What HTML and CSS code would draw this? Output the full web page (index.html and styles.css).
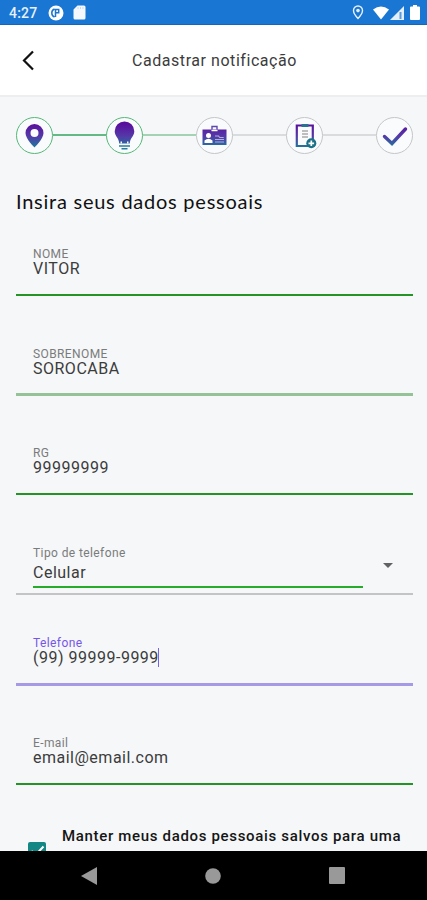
FILE: index.html
```html
<!DOCTYPE html>
<html lang="pt-BR">
<head>
    <meta charset="UTF-8">
    <meta name="viewport" content="width=device-width, initial-scale=1.0">
    <title>Cadastrar notificação</title>
    <link rel="stylesheet" href="styles.css">
</head>
<body>

    <div class="status-bar">
        <span class="clock">4:27</span>
        <svg class="status-app" width="16" height="16" viewBox="0 0 16 16">
            <circle cx="8" cy="8" r="7.5" fill="#fff"/>
            <path d="M6.5 4a4.3 4.3 0 0 0 0 8M7.5 12V4.5h3.2v3.3H8" fill="none" stroke="#1976d2" stroke-width="1.5"/>
        </svg>
        <svg class="status-card" width="13" height="15" viewBox="0 0 13 15">
            <path d="M4.5.5H11a1.5 1.5 0 0 1 1.5 1.5v11a1.5 1.5 0 0 1-1.5 1.5H2A1.5 1.5 0 0 1 .5 13V4.5z" fill="#f4f8fd"/>
            <path d="M5 2v2M7.5 2v2M10 2v2" stroke="#c3daf3"/>
        </svg>
        <div class="status-right">
            <svg width="12" height="15" viewBox="0 0 12 15">
                <path d="M6 1a4.5 4.5 0 0 0-4.5 4.6C1.5 9 6 13.5 6 13.5S10.5 9 10.5 5.6A4.5 4.5 0 0 0 6 1z" fill="none" stroke="#e6f0fb" stroke-width="1.4"/>
                <circle cx="6" cy="5.6" r="1.8" fill="#e6f0fb"/>
            </svg>
            <svg class="wifi" width="16" height="14" viewBox="0 0 16 14">
                <path d="M0 3.6Q8-2.6 16 3.6L8 13.5z" fill="#fff"/>
            </svg>
            <svg class="signal" width="14" height="14" viewBox="0 0 14 14">
                <path d="M0 14L14 0v14z" fill="#e3effb"/>
                <path d="M10.5 6v7" stroke="#5b9ade" stroke-width="2"/>
            </svg>
            <svg class="battery" width="10" height="15" viewBox="0 0 10 15">
                <path d="M3 0h4v1.5h2q1 0 1 1V14q0 1-1 1H1q-1 0-1-1V2.5q0-1 1-1h2z" fill="#fff"/>
            </svg>
        </div>
    </div>

    <header class="header">
        <svg class="back" width="14" height="22" viewBox="0 0 14 22">
            <path d="M12 2.5L3 11.5l9 9" fill="none" stroke="#111" stroke-width="2.2"/>
        </svg>
        <h1>Cadastrar notificação</h1>
    </header>

    <main class="content">
        <svg class="defs" width="0" height="0">
            <defs>
                <linearGradient id="grad" gradientUnits="userSpaceOnUse" x1="0" y1="5" x2="0" y2="31">
                    <stop offset="0" stop-color="#5a0c9c"/>
                    <stop offset=".5" stop-color="#5538a8"/>
                    <stop offset="1" stop-color="#17809a"/>
                </linearGradient>
            </defs>
        </svg>

        <div class="steps">
            <div class="step done">
                <svg viewBox="0 0 36 36">
                    <path fill-rule="evenodd" d="M17.5 6a9 9 0 0 0-9 9C8.5 21 17.5 29.5 17.5 29.5s9-8.5 9-14.5a9 9 0 0 0-9-9zM17.5 11a4 4 0 1 1 0 8 4 4 0 0 1 0-8z" fill="url(#grad)"/>
                </svg>
            </div>
            <div class="line done"></div>
            <div class="step done">
                <svg viewBox="0 0 36 36">
                    <path d="M17.5 3.5a9.8 9.8 0 0 0-9.8 9.8c0 5 4.5 7 4.5 12.2h10.6c0-5.2 4.5-7.2 4.5-12.2a9.8 9.8 0 0 0-9.8-9.8z" fill="url(#grad)"/>
                    <path d="M13.5 24.5H15M20 24.5h1.5" stroke="#fff" stroke-width="1.8"/>
                    <path d="M12 28h11M14.5 30.8h6" stroke="#247f9d" stroke-width="1.5"/>
                </svg>
            </div>
            <div class="line partial"></div>
            <div class="step">
                <svg viewBox="0 0 36 36">
                    <path d="M5.5 11.5h24V27h-24z" fill="url(#grad)"/>
                    <path d="M15 13V8.5h5V13" fill="none" stroke="#5d48ad" stroke-width="1.4"/>
                    <path d="M14.5 12.5h6" stroke="#fff" stroke-width="1.5"/>
                    <circle cx="11.5" cy="17.5" r="2.5" fill="#fff"/>
                    <path d="M7.5 25v-2.5q4-3.5 8 0V25z" fill="#fff"/>
                    <path d="M18 18h3.5l1.2 1.5h4M18 21.5h9M18 24h9" fill="none" stroke="#b9abe0" stroke-width="1.1"/>
                </svg>
            </div>
            <div class="line"></div>
            <div class="step">
                <svg viewBox="0 0 36 36">
                    <path d="M9.8 7.5h16V28h-16z" fill="none" stroke="url(#grad)" stroke-width="2.2"/>
                    <path d="M14.5 7.5h7" stroke="#2b7193" stroke-width="3"/>
                    <path d="M15 13h6M15 16h6M15 19h6" stroke="#aaa" stroke-width="1.3"/>
                    <circle cx="24.3" cy="25.3" r="5" fill="#1b7188"/>
                    <path d="M24.3 22.5v5.6M21.5 25.3h5.6" stroke="#fff" stroke-width="1.7"/>
                </svg>
            </div>
            <div class="line"></div>
            <div class="step">
                <svg viewBox="0 0 36 36">
                    <path d="M7.5 18.5l7.5 7L28.500 11" fill="none" stroke="url(#grad)" stroke-width="3.4" stroke-linecap="round"/>
                </svg>
            </div>
        </div>

        <h2>Insira seus dados pessoais</h2>

        <form class="form">
            <div class="field">
                <label>NOME</label>
                <div class="value">VITOR</div>
            </div>
            <div class="field faded">
                <label>SOBRENOME</label>
                <div class="value">SOROCABA</div>
            </div>
            <div class="field">
                <label>RG</label>
                <div class="value">99999999</div>
            </div>
            <div class="field select">
                <div class="select-main">
                    <label>Tipo de telefone</label>
                    <div class="value">Celular</div>
                </div>
                <div class="arrow"></div>
            </div>
            <div class="field active">
                <label>Telefone</label>
                <div class="value phone">(99) 99999-9999<span class="caret"></span></div>
            </div>
            <div class="field email">
                <label>E-mail</label>
                <div class="value">email@email.com</div>
            </div>
        </form>

        <div class="save-data">
            <div class="checkbox">
                <svg width="18" height="18" viewBox="0 0 18 18">
                    <path d="M3.5 9l4 4 8-8.5" fill="none" stroke="#fff" stroke-width="2"/>
                </svg>
            </div>
            <p>Manter meus dados pessoais salvos para uma próxima notificação</p>
        </div>
    </main>

    <nav class="nav-bar">
        <svg width="16" height="18" viewBox="0 0 16 18"><path d="M0 9L16 0v18z" fill="#999"/></svg>
        <svg width="16" height="16" viewBox="0 0 16 16"><circle cx="8" cy="8" r="7.8" fill="#999"/></svg>
        <svg width="16" height="17" viewBox="0 0 16 17"><rect width="16" height="17" rx="1" fill="#999"/></svg>
    </nav>

</body>
</html>
```

FILE: styles.css
```css
* {
    box-sizing: border-box;
}

body {
    margin: 0;
    height: 900px;
    display: flex;
    flex-direction: column;
    overflow: hidden;
    font-family: Roboto, sans-serif;
    background-color: #f5f7f9;
    color: #3c3c3c;
}

svg {
    display: block;
}

/* Status bar */
.status-bar {
    flex: none;
    height: 25px;
    display: flex;
    align-items: center;
    padding: 1px 7px 0 9px;
    background-color: #1976d2;
    border-bottom: 1px solid #1565bd;
    color: #e8f1fb;
}

.clock {
    width: 39px;
    font-size: 14px;
    font-weight: 500;
    letter-spacing: 0.2px;
}

.status-card {
    margin-left: 9px;
}

.status-right {
    margin-left: auto;
    display: flex;
    align-items: center;
}

.wifi {
    margin-left: 9px;
}

.signal {
    margin-left: 1px;
}

.battery {
    margin-left: 6px;
}

/* Header */
.header {
    flex: none;
    height: 72px;
    display: flex;
    align-items: center;
    padding-left: 21px;
    background-color: #fff;
    border-bottom: 2px solid #eceef0;
}

.header h1 {
    margin: 0 0 0 97px;
    font-size: 16px;
    font-weight: 400;
    letter-spacing: 0.55px;
    white-space: nowrap;
}

.content {
    flex: 1;
    min-height: 0;
    overflow: hidden;
    padding: 20px 14px 0 16px;
}

/* Steps */
.steps {
    display: flex;
    align-items: center;
    height: 36px;
}

.step {
    flex: none;
    width: 37px;
    height: 37px;
    border: 1px solid #c4c6c7;
    border-radius: 50%;
    background-color: #fafbfc;
}

.step svg {
    width: 36px;
    height: 36px;
}

.step.done {
    border-color: #55b878;
}

.line {
    flex: 1;
    height: 2px;
    background-color: #d9dcdd;
}

.line.done {
    background-color: #65b984;
}

.line.partial {
    background-color: #a4d2b5;
}

h2 {
    margin: 35px 0 0;
    height: 26px;
    line-height: 26px;
    font-family: Lato, sans-serif;
    font-size: 20px;
    font-weight: 400;
    letter-spacing: 0.75px;
    color: #111;
    white-space: nowrap;
}

/* Form fields */
.form {
    padding-top: 21px;
}

.field {
    height: 61px;
    margin-bottom: 38.5px;
    padding: 12px 17px 0;
    border-bottom: 2px solid #259426;
}

.field.faded {
    border-bottom: 3px solid #95c297;
}

.field label {
    display: block;
    height: 14px;
    line-height: 14px;
    font-size: 12px;
    letter-spacing: 0.4px;
    color: #7b7b7b;
}

.value {
    height: 16px;
    line-height: 15px;
    font-size: 16px;
    letter-spacing: 0.5px;
    white-space: nowrap;
}

.field.select {
    height: 61px;
    margin-bottom: 29px;
    display: flex;
    justify-content: space-between;
    border-bottom: 2px solid #c2c4c6;
}

.select-main {
    width: 330px;
    height: 42px;
    border-bottom: 2px solid #27ab2a;
}

.select .value {
    line-height: 25px;
}

.arrow {
    width: 0;
    height: 0;
    margin: 17px 3px 0 0;
    border: 5px solid transparent;
    border-top-color: #606264;
    border-bottom: none;
}

.field.active {
    height: 62px;
    border-bottom: 3px solid #a69ae7;
    margin-bottom: 38px;
}

.active label {
    color: #7656e8;
}

.phone {
    display: flex;
    align-items: center;
}

.caret {
    width: 1px;
    height: 19px;
    margin-left: -1px;
    background-color: #7963df;
}

.field.email {
    margin-bottom: 40px;
}

/* Save data option */
.save-data {
    display: flex;
    padding-left: 12px;
}

.save-data p {
    margin: 0 0 0 16px;
    width: 349px;
    font-size: 15px;
    font-weight: 500;
    line-height: 22px;
    letter-spacing: 0.67px;
    color: #151515;
}

.checkbox {
    flex: none;
    width: 18px;
    height: 18px;
    margin-top: 17px;
    border-radius: 2px;
    background-color: #128783;
}

/* Navigation bar */
.nav-bar {
    flex: none;
    height: 49px;
    display: flex;
    align-items: center;
    justify-content: space-between;
    padding: 0 82px 0 81px;
    background-color: #000;
}
```
